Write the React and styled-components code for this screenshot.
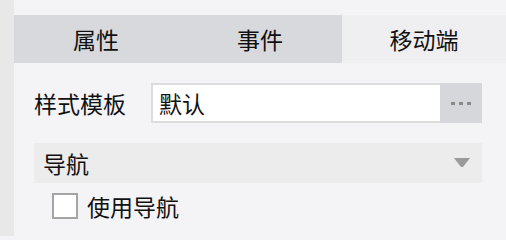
import React, { useState } from "react";
import styled, { createGlobalStyle } from "styled-components";

const GlobalStyle = createGlobalStyle`
  html, body {
    margin: 0;
    padding: 0;
    background: #f4f4f6;
  }
  body {
    font-family: "Noto Sans CJK SC", "Noto Sans", sans-serif;
    color: #111;
  }
`;

const Page = styled.div`
  display: flex;
  width: 506px;
  height: 236px;
  overflow: hidden;
`;

const SideStrip = styled.div`
  width: 14px;
  flex-shrink: 0;
  background: #e8e8e8;
`;

const Panel = styled.div`
  flex: 1;
  display: flex;
  flex-direction: column;
  padding-top: 15px;
  background: #f4f4f6;
`;

const Tabs = styled.div`
  display: grid;
  grid-template-columns: repeat(3, 1fr);
  height: 48px;
`;

const Tab = styled.button`
  border: none;
  margin: 0;
  padding: 0;
  font: inherit;
  font-size: 23px;
  color: #111;
  background: ${(p) => (p.$active ? "#efeff1" : "#d8d9dd")};
  cursor: pointer;
`;

const Body = styled.div`
  display: flex;
  flex-direction: column;
  padding: 20px 24px 0 19px;
`;

const FieldRow = styled.div`
  display: flex;
  align-items: center;
  height: 40px;
`;

const FieldLabel = styled.span`
  font-size: 23px;
  width: 117px;
  flex-shrink: 0;
  padding-left: 1px;
`;

const InputBox = styled.div`
  display: flex;
  flex: 1;
  height: 40px;
  border: 2px solid #dcdcdc;
  border-right: none;
  box-sizing: border-box;
  background: #fff;
`;

const TextInput = styled.input`
  flex: 1;
  min-width: 0;
  border: none;
  outline: none;
  padding: 0 6px;
  font: inherit;
  font-size: 23px;
  color: #111;
  background: transparent;
`;

const MoreButton = styled.button`
  width: 42px;
  height: 40px;
  margin: -2px 0;
  border: none;
  background: #d6d7da;
  display: flex;
  align-items: center;
  justify-content: center;
  gap: 4px;
  padding: 0;
`;

const Dot = styled.span`
  width: 4px;
  height: 3px;
  background: #8a8a8a;
`;

const SectionHeader = styled.div`
  display: flex;
  align-items: center;
  justify-content: space-between;
  height: 40px;
  margin-top: 20px;
  margin-left: 1px;
  padding: 0 12px 0 9px;
  background: #ececec;
  font-size: 23px;
`;

const CheckRow = styled.label`
  display: flex;
  align-items: center;
  gap: 9px;
  height: 26px;
  margin-top: 10px;
  padding-left: 19px;
  font-size: 23px;
  line-height: 26px;
  cursor: pointer;
`;

const CheckBox = styled.span`
  width: 26px;
  height: 26px;
  box-sizing: border-box;
  border: 2px solid #a4a4a4;
  background: #fff;
  flex-shrink: 0;
`;

export default function App() {
  const [tab, setTab] = useState(2);
  const tabs = ["属性", "事件", "移动端"];

  return (
    <>
      <GlobalStyle />
      <Page>
        <SideStrip />
        <Panel>
          <Tabs>
            {tabs.map((t, i) => (
              <Tab key={t} $active={tab === i} onClick={() => setTab(i)}>
                {t}
              </Tab>
            ))}
          </Tabs>
          <Body>
            <FieldRow>
              <FieldLabel>样式模板</FieldLabel>
              <InputBox>
                <TextInput defaultValue="默认" />
                <MoreButton>
                  <Dot />
                  <Dot />
                  <Dot />
                </MoreButton>
              </InputBox>
            </FieldRow>
            <SectionHeader>
              <span>导航</span>
              <svg width="16" height="10" viewBox="0 0 16 10">
                <path d="M0 0 H16 L9 9 H7 Z" fill="#9a9a9a" />
              </svg>
            </SectionHeader>
            <CheckRow>
              <CheckBox />
              <span>使用导航</span>
            </CheckRow>
          </Body>
        </Panel>
      </Page>
    </>
  );
}
